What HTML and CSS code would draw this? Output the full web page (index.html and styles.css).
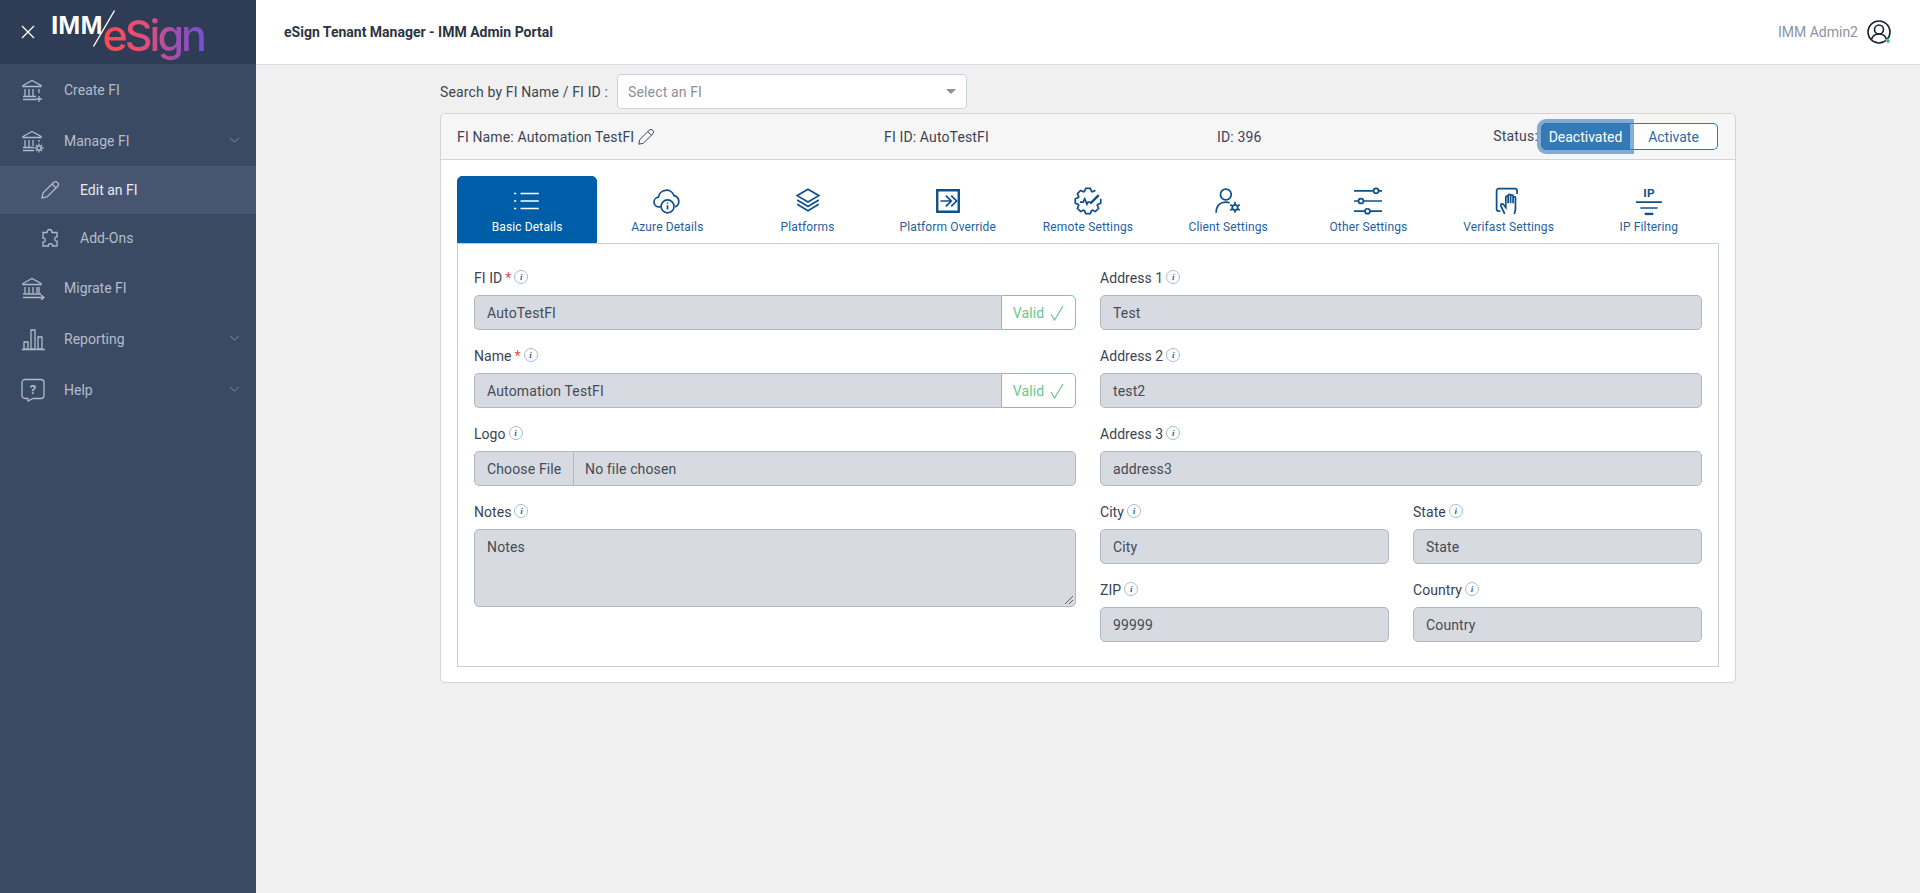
FILE: index.html
```html
<!DOCTYPE html>
<html lang="en">
<head>
<meta charset="utf-8">
<title>eSign Tenant Manager - IMM Admin Portal</title>
<link rel="stylesheet" href="styles.css">
</head>
<body>
<div class="app">
  <aside class="sidebar">
    <div class="brand">
      <svg class="close" viewBox="0 0 14 14"><path d="M1 1l12 12M13 1L1 13"/></svg>
      <div class="logo"><span class="imm">IMM</span><svg class="slash" viewBox="0 0 22 37"><path d="M21.500 .5L.5 36.500"/></svg><span class="esign">eSign</span></div>
    </div>
    <nav class="nav">
      <a class="nav-item"><svg class="nav-ic" viewBox="0 0 24 24"><path d="M2 7.500L11 2.500l9 5v1H2zM4 11v7M8 11v7M12 11v7M18 11v4M2 18.500h13M2 21.500h13M18 18v6M15 21h6"/></svg><span>Create FI</span></a>
      <a class="nav-item"><svg class="nav-ic" viewBox="0 0 24 24"><path d="M2 7.500L11 2.500l9 5v1H2zM4 11v7M8 11v7M12 11v6M18 11v2M2 18.500h11M2 21.500h11"/><circle cx="18" cy="19" r="2"/><path d="M18 14.500v2M18 21.500v2M13.500 19h2M20.500 19h2M15 16l1.300 1.300M19.700 20.700L21 22M21 16l-1.300 1.300M16.300 20.700L15 22"/></svg><span>Manage FI</span><svg class="chev" viewBox="0 0 12 7"><path d="M1 1l5 5 5-5"/></svg></a>
      <a class="nav-item sub active"><svg class="nav-ic small" viewBox="0 0 20 20"><path d="M2 18l1-5L13.500 2.500a2 2 0 0 1 4 4L7 17zM12 4l4 4"/></svg><span>Edit an FI</span></a>
      <a class="nav-item sub"><svg class="nav-ic small" viewBox="0 0 20 20"><path d="M7 4.500c0-4 5-4 5 0h5v4.500c-3-1-3 5 0 4v5h-4.500c1-3-5-3-4 0H3v-4c3 1 3-5 0-4V4.500z"/></svg><span>Add-Ons</span></a>
      <a class="nav-item"><svg class="nav-ic" viewBox="0 0 24 24"><path d="M2 7.500L11 2.500l9 5v1H2zM4 11v6M8 11v6M12 11v6M16 11v6M18 11v6M2 18h18M2 21.500h21M20 19l3 2.500-3 2.500"/></svg><span>Migrate FI</span></a>
      <a class="nav-item"><svg class="nav-ic" viewBox="0 0 24 24"><path d="M1 22.500h23M3 22v-7h4v7zM10 22V3h4v19zM17 22V10h4v12z"/></svg><span>Reporting</span><svg class="chev" viewBox="0 0 12 7"><path d="M1 1l5 5 5-5"/></svg></a>
      <a class="nav-item"><svg class="nav-ic" viewBox="0 0 24 24"><path d="M4 1.500h16a3 3 0 0 1 3 3v13a3 3 0 0 1-3 3h-8l-5 2.500v-2.500H4a3 3 0 0 1-3-3v-13a3 3 0 0 1 3-3z"/><text class="q" x="12" y="15.500">?</text></svg><span>Help</span><svg class="chev" viewBox="0 0 12 7"><path d="M1 1l5 5 5-5"/></svg></a>
    </nav>
  </aside>
  <div class="content">
    <header class="topbar">
      <h1 class="title">eSign Tenant Manager - IMM Admin Portal</h1>
      <div class="user"><span>IMM Admin2</span>
        <svg class="avatar" viewBox="0 0 24 24"><circle cx="12" cy="12" r="11"/><circle cx="12" cy="9.500" r="4.500"/><path d="M4.500 19.500c1-4 4-5.500 7.500-5.500s6.500 1.500 7.500 5.500"/><circle class="dot" cx="21" cy="21" r="2"/></svg>
      </div>
    </header>
    <main class="main">
      <div class="search">
        <label>Search by FI Name / FI ID :</label>
        <div class="select"><span>Select an FI</span><i class="caret"></i></div>
      </div>
      <section class="card">
        <div class="card-head">
          <div class="h-name">FI Name: Automation TestFI <svg class="pen" viewBox="0 0 20 20"><path d="M2 18l1-5L13.500 2.500a2 2 0 0 1 4 4L7 17zM12 4l4 4"/></svg></div>
          <div class="h-id">FI ID: AutoTestFI</div>
          <div class="h-num">ID: 396</div>
          <div class="h-status"><span class="status-label">Status:</span><div class="toggle"><button class="t-on">Deactivated</button><button class="t-off">Activate</button></div></div>
        </div>
        <div class="card-body">
          <div class="tabs">
            <div class="tab active"><svg viewBox="0 0 26 26"><path d="M7 6h17M7 13h17M7 20h17M1 6h2M1 13h2M1 20h2"/></svg><span>Basic Details</span></div>
            <div class="tab"><svg viewBox="0 0 26 26"><path d="M7 18.500H6a4.500 4.500 0 0 1-1-9 7.500 7.500 0 0 1 14.500-1.500 5.500 5.500 0 0 1 1 10.500"/><circle cx="13.500" cy="18" r="6"/><path d="M13.500 17v4M13.500 14.500v1"/></svg><span>Azure Details</span></div>
            <div class="tab"><svg viewBox="0 0 26 26"><path d="M13 2l10 6-10 6L3 8zM3 12l10 6 10-6M3 16l10 6 10-6"/></svg><span>Platforms</span></div>
            <div class="tab"><svg viewBox="0 0 26 26"><path class="thick" d="M3 3h20v20H3z"/><path d="M6 13h9M11 8l5 5-5 5M16 8l5 5-5 5"/></svg><span>Platform Override</span></div>
            <div class="tab"><svg viewBox="0 0 26 26"><path d="M24.820 11L24.820 15.080 21.930 16.250 21.610 17.010 22.830 19.880 19.880 22.830 17.010 21.610 16.250 21.930 15.080 24.820 10.920 24.820 9.750 21.930 8.990 21.610 6.120 22.830 3.170 19.880 4.390 17.010 4.070 16.250 1.180 15.080 1.180 10.920 4.070 9.750 4.390 8.990 3.170 6.120 6.120 3.170 8.990 4.390 9.750 4.070 10.920 1.180 15.080 1.180 16.250 4.070 17.010 4.390 19.880 3.170"/><path d="M5.500 14h3l1.500-3 2 5 1-2h2"/><path class="thick" d="M15 15.500l8-8"/></svg><span>Remote Settings</span></div>
            <div class="tab"><svg viewBox="0 0 26 26"><circle cx="11" cy="7" r="5"/><path d="M2 24c0-7 4-10 9-10 1.500 0 2.500.2 3.500.7"/><circle cx="19.500" cy="19" r="2.500"/><path d="M19.500 14v2M19.500 22v2M15 16.500l1.800 1M22.200 20.500l1.800 1M24 16.500l-1.800 1M16.800 20.500l-1.800 1"/></svg><span>Client Settings</span></div>
            <div class="tab"><svg viewBox="0 0 26 26"><path d="M0 3.500h18M23 3.500h3M0 13h4M9 13h17M0 22.500h10M15 22.500h11"/><circle cx="20.500" cy="3.500" r="2.300"/><circle cx="6.500" cy="13" r="2.300"/><circle cx="12.500" cy="22.500" r="2.300"/></svg><span>Other Settings</span></div>
            <div class="tab"><svg viewBox="0 0 26 26"><path d="M5 22.500H3.500A2 2 0 0 1 1.500 20.500V3.500a2 2 0 0 1 2-2h15a2 2 0 0 1 2 2v3"/><path d="M9 25l-3.500-7.500c-.5-2 1.500-2.500 2.500-1l2 2.500V9.500c0-1.500 2.200-1.500 2.200 0V15M12.200 15V8c0-1.500 2.300-1.500 2.300 0v7M14.500 15V8.500c0-1.500 2.300-1.500 2.300 0V15M16.800 15V10c0-1.500 2.200-1.500 2.200 0v10c0 2-.5 3.500-1 5"/></svg><span>Verifast Settings</span></div>
            <div class="tab"><svg viewBox="0 0 26 26"><text class="ip" x="13" y="9.500">IP</text><path d="M1 14h24M5 19.500h16"/><path class="thick" d="M9 25h8"/></svg><span>IP Filtering</span></div>
          </div>
          <div class="panel">
            <div class="col">
              <div class="field"><label>FI ID <em>*</em> <i class="inf">i</i></label><div class="group"><div class="input">AutoTestFI</div><div class="valid">Valid <svg viewBox="0 0 14 16"><path d="M1 9l3.500 6L13 1"/></svg></div></div></div>
              <div class="field"><label>Name <em>*</em> <i class="inf">i</i></label><div class="group"><div class="input">Automation TestFI</div><div class="valid">Valid <svg viewBox="0 0 14 16"><path d="M1 9l3.500 6L13 1"/></svg></div></div></div>
              <div class="field"><label>Logo <i class="inf">i</i></label><div class="input file"><span class="choose">Choose File</span><span class="nofile">No file chosen</span></div></div>
              <div class="field"><label>Notes <i class="inf">i</i></label><div class="input notes">Notes<svg class="grip" viewBox="0 0 10 10"><path d="M1 9l8-8M5 9l4-4"/></svg></div></div>
            </div>
            <div class="col">
              <div class="field"><label>Address 1 <i class="inf">i</i></label><div class="input">Test</div></div>
              <div class="field"><label>Address 2 <i class="inf">i</i></label><div class="input">test2</div></div>
              <div class="field"><label>Address 3 <i class="inf">i</i></label><div class="input">address3</div></div>
              <div class="pair">
                <div class="field"><label>City <i class="inf">i</i></label><div class="input">City</div></div>
                <div class="field"><label>State <i class="inf">i</i></label><div class="input">State</div></div>
              </div>
              <div class="pair">
                <div class="field"><label>ZIP <i class="inf">i</i></label><div class="input">99999</div></div>
                <div class="field"><label>Country <i class="inf">i</i></label><div class="input">Country</div></div>
              </div>
            </div>
          </div>
        </div>
      </section>
    </main>
  </div>
</div>
</body>
</html>
```
FILE: styles.css
```css
* { box-sizing: border-box; }
html, body { margin: 0; height: 100%; overflow: hidden; }
body { font-family: Roboto, "Liberation Sans", sans-serif; font-size: 14px; letter-spacing: .14px; color: #3c4453; background: #f0f0f0; }
.app { display: flex; height: 893px; }

.sidebar { width: 256px; flex: none; background: #3b4a63; letter-spacing: 0; }
.brand { height: 64px; background: #2f3c55; display: flex; align-items: center; padding-left: 21px; }
.close { width: 14px; height: 14px; fill: none; stroke: #fff; stroke-width: 1.300; }
.logo { display: flex; align-items: center; margin-left: 16px; height: 64px; position: relative; }
.imm { font-family: "Liberation Sans", sans-serif; font-weight: 700; font-size: 26.500px; color: #fff; line-height: 1; margin-top: -13px; }
.slash { position: absolute; left: 42px; top: 10px; width: 22px; height: 37px; fill: none; stroke: #fff; stroke-width: 1.300; }
.esign { font-family: Inter, sans-serif; font-weight: 500; font-size: 43px; letter-spacing: -3px; line-height: 56px; padding-right: 4px; margin-left: 0; margin-top: 6px; background: linear-gradient(90deg, #ff4a50 0%, #e14f78 40%, #a04fb0 70%, #6f50d8 100%); -webkit-background-clip: text; background-clip: text; color: transparent; }

.nav { display: flex; flex-direction: column; }
.nav-item { height: 51px; display: flex; align-items: center; padding-left: 21px; color: #b3bdcc; font-size: 14px; position: relative; }
.nav-item > span { margin-left: 19px; }
.nav-ic { width: 24px; height: 24px; flex: none; fill: none; stroke: #b0bac8; stroke-width: 1.300; }
.nav-ic .q { font-family: Roboto, sans-serif; font-size: 13px; font-weight: 700; text-anchor: middle; fill: #b0bac8; stroke: none; }
.nav-item.sub { height: 48px; padding-left: 40px; }
.nav-item.sub > span { margin-left: 20px; }
.nav-ic.small { width: 20px; height: 20px; }
.nav-item.active { background: #475571; color: #e6eaf0; }
.chev { position: absolute; right: 16px; top: 22px; width: 11px; height: 6px; fill: none; stroke: #a2adbd; stroke-width: 0.800; }

.content { flex: 1; min-width: 0; display: flex; flex-direction: column; }
.topbar { height: 65px; background: #fff; border-bottom: 1px solid #d8dbe2; display: flex; align-items: center; justify-content: space-between; padding: 0 29px 0 28px; }
.title { margin: 0; font-size: 14px; font-weight: 700; letter-spacing: 0; color: #2c3442; }
.user { display: flex; align-items: center; gap: 9px; color: #8a94a6; font-size: 14px; letter-spacing: 0; }
.avatar { width: 24px; height: 24px; fill: none; stroke: #1e222b; stroke-width: 1.600; }
.avatar .dot { fill: #2dbd6e; stroke: #fff; stroke-width: 0.500; }

.main { flex: 1; padding: 9px 184px 0 184px; }
.search { display: flex; align-items: center; height: 35px; }
.search label { color: #3c4453; }
.select { margin-left: 9px; width: 350px; height: 35px; background: #fff; border: 1px solid #ced4da; border-radius: 4px; display: flex; align-items: center; justify-content: space-between; padding: 0 10px; color: #8b8f97; }
.caret { width: 0; height: 0; border-left: 5px solid transparent; border-right: 5px solid transparent; border-top: 5px solid #8b8f97; }

.card { margin-top: 4px; background: #fff; border: 1px solid #d4d4d4; border-radius: 5px; height: 570px; }
.card-head { height: 46px; background: #f6f6f6; border-bottom: 1px solid #d4d4d4; border-radius: 5px 5px 0 0; display: flex; align-items: center; padding: 0 17px 0 16px; position: relative; }
.h-name { width: 427px; display: flex; align-items: center; gap: 3px; }
.pen { width: 18px; height: 18px; fill: none; stroke: #3c4453; stroke-width: 1.100; }
.h-id { width: 333px; }
.h-num { flex: 1; }
.h-status { display: flex; align-items: center; }
.status-label { margin-top: -2px; margin-right: -1px; letter-spacing: .2px; }
.toggle { display: flex; margin-left: 4px; height: 27px; }
.toggle button { font: inherit; font-size: 14px; padding: 0; border: 1px solid #2f78b5; height: 27px; }
.t-on { width: 89px; background: #337ab7; color: #fff; border-radius: 5px 0 0 5px; box-shadow: 0 0 0 4px rgba(51,122,183,.6); position: relative; }
.t-off { width: 88px; background: #fff; color: #2c6ca5; border-left: 0 !important; border-radius: 0 5px 5px 0; }

.card-body { padding: 16px 16px 0 16px; }
.tabs { display: flex; height: 67px; }
.tab { width: 140.500px; display: flex; flex-direction: column; align-items: center; padding-top: 11px; color: #1f5f9e; font-size: 12px; }
.tab svg { width: 28px; height: 28px; fill: none; stroke: #0f4f8a; stroke-width: 1.600; flex: none; overflow: visible; }
.tab svg .thick { stroke-width: 2.200; }
.tab svg .ip { font-family: Roboto, sans-serif; font-size: 11px; font-weight: 700; text-anchor: middle; fill: #0f4f8a; stroke: none; }
.tab span { margin-top: 5px; line-height: 14px; }
.tab.active { background: #005ea8; color: #fff; border-radius: 5px 5px 0 0; padding-top: 10px; border: 1px solid #005ea8; }
.tab.active svg { stroke: #fff; stroke-width: 1.400; }

.panel { height: 424px; border: 1px solid #c8ccd4; display: grid; grid-template-columns: 602px 602px; column-gap: 24px; padding: 25px 16px 0 16px; align-items: start; }
.col { display: flex; flex-direction: column; }
.field { height: 78px; }
.field label { display: flex; align-items: center; gap: 3px; height: 18px; margin-bottom: 8px; color: #3c4453; letter-spacing: .05px; }
.field label em { color: #e2534b; font-style: normal; }
.inf { width: 14px; height: 14px; border: 1px solid #a9bccb; border-radius: 50%; font: italic 700 9px/12px "Liberation Serif", serif; color: #1c5f9c; text-align: center; margin-top: -2px; }
.group { display: flex; }
.input { height: 35px; background: #d7dae0; border: 1px solid #b3b7bf; border-radius: 5px; padding: 0 12px; display: flex; align-items: center; color: #444b57; flex: 1; }
.group .input { border-radius: 5px 0 0 5px; border-right: 0; }
.valid { width: 75px; height: 35px; border: 1px solid #6fcf97; border-radius: 0 5px 5px 0; display: flex; align-items: center; justify-content: center; gap: 6px; color: #67c98d; background: #fff; }
.valid svg { width: 14px; height: 16px; fill: none; stroke: #67c98d; stroke-width: 1.200; }
.file { padding: 0; }
.choose { height: 100%; padding: 0 0 0 12px; border-right: 1px solid #b3b7bf; display: flex; align-items: center; width: 99px; }
.nofile { margin-left: 11px; }
.input.notes { height: 78px; align-items: flex-start; padding-top: 9px; position: relative; }
.grip { position: absolute; right: 1px; bottom: 1px; width: 10px; height: 10px; fill: none; stroke: #5a5f68; stroke-width: 1; }
.pair { display: grid; grid-template-columns: 289px 289px; column-gap: 24px; }
```
